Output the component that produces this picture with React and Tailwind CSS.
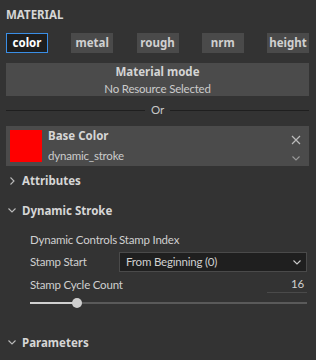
import React from "react";

const Chevron = ({ dir = "down", className = "" }) => (
  <svg width="10" height="10" viewBox="0 0 10 10" className={className} fill="none" stroke="currentColor" strokeWidth="1.1">
    {dir === "down" ? <path d="M1.5 3.5 L5 7 L8.5 3.5" /> : <path d="M3.5 1.5 L7 5 L3.5 8.5" />}
  </svg>
);

const bold = "font-bold text-[11.5px] tracking-normal [font-family:'Noto_Sans',sans-serif]";

export default function App() {
  const tabs = ["color", "metal", "rough", "nrm", "height"];
  return (
    <div
      className="w-[316px] h-[360px] bg-[#333333] text-[#d0d0d0] text-[11.5px] tracking-[-0.2px] overflow-hidden"
      style={{ fontFamily: 'Lato, "Noto Sans", sans-serif' }}
    >
      <div className="pl-[6px] pr-[7px]">
        <div className={`pt-[7px] h-[25px] leading-[16px] text-[#d6d6d6] ${bold}`}>MATERIAL</div>
        <div className="mt-[8px] flex justify-between">
          {tabs.map((t, i) => (
            <div
              key={t}
              className={
                i === 0
                  ? `w-[42px] h-[20px] flex items-center justify-center bg-[#1e1e1e] border border-[#3a8ee6] text-white leading-none ${bold}`
                  : `w-[42px] h-[20px] flex items-center justify-center bg-[#4a4a4a] text-[#d0d0d0] leading-none ${bold}`
              }
            >
              {t}
            </div>
          ))}
        </div>
        <div className="mt-[10px] h-[33px] bg-[#4b4b4b] flex flex-col items-center justify-center leading-[17px]">
          <div className={`text-[#d4d4d4] ${bold}`}>Material mode</div>
          <div className="text-[#cccccc]">No Resource Selected</div>
        </div>
        <div className="mt-[6px] h-[16px] flex items-center gap-[6px]">
          <div className="flex-1 h-px bg-[#1f1f1f]" />
          <div className="text-[#c8c8c8] leading-none">Or</div>
          <div className="flex-1 h-px bg-[#1f1f1f]" />
        </div>
        <div className="mt-[8px] h-[40px] bg-[#4b4b4b] p-[4px] flex gap-[6px]">
          <div className="w-[32px] h-[32px] bg-[#ff0000]" />
          <div className="flex-1 flex flex-col justify-between leading-[16px]">
            <div className={`text-[#d6d6d6] -mt-[2px] ${bold}`}>Base Color</div>
            <div className="text-[#cccccc] -mb-[2px]">dynamic_stroke</div>
          </div>
          <div className="w-[14px] mr-[2px] flex flex-col items-center justify-between text-[#bbbbbb]">
            <svg width="10" height="10" viewBox="0 0 10 10" stroke="currentColor" strokeWidth="1.2" className="mt-[5px]">
              <path d="M1 1 L9 9 M9 1 L1 9" />
            </svg>
            <Chevron className="text-[#999999] mb-[-1px]" />
          </div>
        </div>
        <div className={`mt-[7px] h-[16px] flex items-center gap-[5px] pl-[1px] text-[#d6d6d6] ${bold}`}>
          <Chevron dir="right" className="text-[#bbbbbb]" />
          <span>Attributes</span>
        </div>
        <div className={`mt-[14px] h-[16px] flex items-center gap-[5px] pl-[1px] text-[#d6d6d6] ${bold}`}>
          <Chevron className="text-[#bbbbbb] -mt-[2px]" />
          <span>Dynamic Stroke</span>
        </div>
        <div className="pl-[24px] pr-[2px]">
          <div className="mt-[13px] h-[16px] flex items-center leading-none">
            <span className="w-[89px] whitespace-nowrap">Dynamic Controls</span>
            <span>Stamp Index</span>
          </div>
          <div className="mt-[4px] h-[20px] flex items-center">
            <span className="w-[89px]">Stamp Start</span>
            <div className="flex-1 h-[20px] bg-[#1f1f1f] border border-[#4a4a4a] flex items-center justify-between pl-[6px] pr-[4px]">
              <span className="text-[#d0d0d0]">From Beginning (0)</span>
              <Chevron className="text-[#cccccc]" />
            </div>
          </div>
          <div className="mt-[5px] h-[16px] flex items-center justify-between">
            <span>Stamp Cycle Count</span>
            <div className="w-[40px] h-[16px] border-b border-[#4a4a4a] text-right pr-[3px] leading-[14px]">16</div>
          </div>
          <div className="mt-[4px] h-[12px] relative flex items-center">
            <div className="w-full h-[2px] bg-[#5a5a5a]" />
            <div className="absolute left-0 top-[5px] w-[47px] h-[2px] bg-[#d0d0d0]" />
            <div className="absolute left-[42px] top-[1px] w-[10px] h-[10px] rounded-full bg-[#cfcfcf]" />
          </div>
        </div>
        <div className={`mt-[26px] h-[16px] flex items-center gap-[5px] pl-[1px] text-[#d6d6d6] ${bold}`}>
          <Chevron className="text-[#bbbbbb] -mt-[2px]" />
          <span>Parameters</span>
        </div>
      </div>
    </div>
  );
}
